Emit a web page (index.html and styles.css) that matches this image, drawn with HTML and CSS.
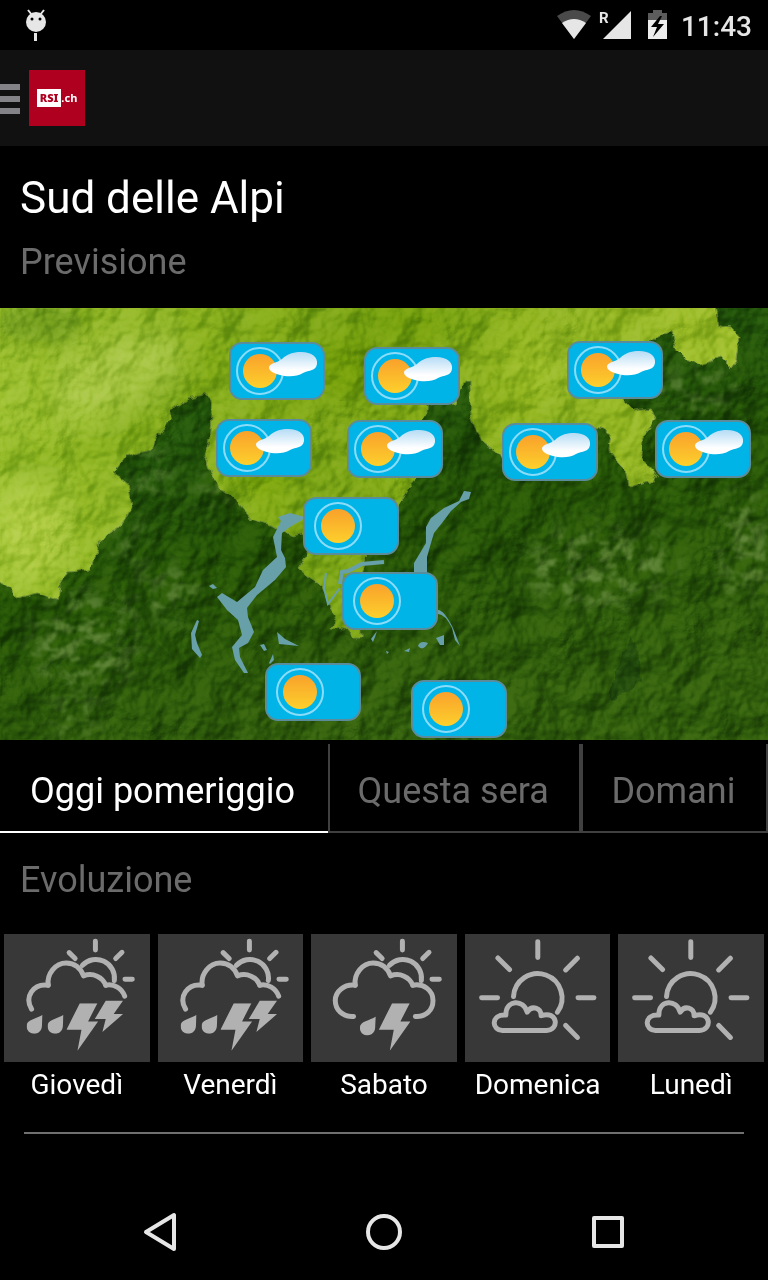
FILE: index.html
```html
<!DOCTYPE html>
<html lang="it">
<head>
    <meta charset="UTF-8">
    <meta name="viewport" content="width=device-width, initial-scale=1.0">
    <title>Meteo - Sud delle Alpi</title>
    <link rel="stylesheet" href="styles.css">
</head>
<body>

    <!-- status bar -->
    <div class="status-bar">
        <svg class="debug-icon" width="24" height="34" viewBox="0 0 24 34">
            <path d="M4 2l4 5M20 2l-4 5" stroke="#e6e6e6" stroke-width="2"/>
            <circle cx="12" cy="14" r="10" fill="#e6e6e6"/>
            <circle cx="8" cy="11" r="1.5"/>
            <circle cx="16" cy="11" r="1.5"/>
            <rect x="10" y="25" width="3" height="8" fill="#e6e6e6"/>
        </svg>
        <div class="status-right">
            <svg width="112" height="32" viewBox="0 0 112 32">
                <path d="M0 7Q17 -5 34 7L17 30Z" fill="#4a4a4a"/>
                <path d="M5 14Q17 6 29 14L17 30Z" fill="#e6e6e6"/>
                <text class="roaming" x="42" y="14">R</text>
                <path d="M46 30H74V2Z" fill="#e6e6e6"/>
                <path d="M91 4h5V1h9v3h5v8H91Z" fill="#5c5c5c"/>
                <path d="M91 11h19v19H91Z" fill="#ededed"/>
                <path d="M103 7l-9 11h6l-4 10 11-13h-6l4-8Z"/>
            </svg>
            <span class="clock">11:43</span>
        </div>
    </div>

    <!-- action bar -->
    <header class="action-bar">
        <button class="menu-button" type="button" aria-label="Menu">
            <span></span><span></span><span></span>
        </button>
        <a class="logo" href="#" aria-label="RSI.ch"><b>RSI</b><i>.ch</i></a>
    </header>

    <main>
        <div class="heading">
            <h1>Sud delle Alpi</h1>
            <h2>Previsione</h2>
        </div>

        <svg class="map" viewBox="0 0 768 432" role="img" aria-label="Mappa">
            <defs>
                <linearGradient id="sun" x2="0" y2="1">
                    <stop offset="0" stop-color="#f9a12b"/>
                    <stop offset="1" stop-color="#fdd02c"/>
                </linearGradient>
                <linearGradient id="cloud" x2="0" y2="1">
                    <stop offset="0" stop-color="#b5dcf5"/>
                    <stop offset=".75" stop-color="#fff"/>
                </linearGradient>
                <linearGradient id="low" x2=".4" y2="1">
                    <stop offset="0" stop-color="#1e5210"/>
                    <stop offset=".6" stop-color="#245306"/>
                    <stop offset="1" stop-color="#315e0c"/>
                </linearGradient>
                <linearGradient id="high" x2="1" y2="0">
                    <stop offset="0" stop-color="#9dc030"/>
                    <stop offset=".45" stop-color="#7ca513"/>
                    <stop offset="1" stop-color="#9fbe2b"/>
                </linearGradient>
                <!-- shaded terrain -->
                <filter id="relief" x="0" y="0" width="100%" height="100%" color-interpolation-filters="sRGB">
                    <feTurbulence type="fractalNoise" baseFrequency=".022 .02" numOctaves="4" seed="21"/>
                    <feColorMatrix values="0 0 0 0 0  0 0 0 0 0  0 0 0 0 0  1 0 0 0 0"/>
                    <feDiffuseLighting surfaceScale="16" diffuseConstant="0.7" lighting-color="#fff">
                        <feDistantLight azimuth="225" elevation="45"/>
                    </feDiffuseLighting>
                    <feGaussianBlur stdDeviation=".6"/>
                </filter>
                <!-- bare ridges -->
                <filter id="ridges" x="-20%" y="-20%" width="140%" height="140%" color-interpolation-filters="sRGB">
                    <feGaussianBlur in="SourceGraphic" stdDeviation="12" result="area"/>
                    <feTurbulence type="fractalNoise" baseFrequency=".06 .08" numOctaves="4" seed="5"/>
                    <feColorMatrix values="0 0 0 0 .5  0 0 0 0 .62  0 0 0 0 .32  6 0 0 0 -2.8"/>
                    <feComposite in2="area" operator="in"/>
                    <feGaussianBlur stdDeviation=".8"/>
                </filter>
                <filter id="ragged" x="-5%" y="-5%" width="110%" height="110%">
                    <feTurbulence type="fractalNoise" baseFrequency=".09" numOctaves="2" seed="3"/>
                    <feDisplacementMap in="SourceGraphic" scale="8" xChannelSelector="R" yChannelSelector="G"/>
                </filter>
                <filter id="haze" x="-50%" y="-50%" width="200%" height="200%">
                    <feGaussianBlur stdDeviation="12"/>
                </filter>
                <symbol id="sunny" viewBox="0 0 98 60">
                    <rect x="2" y="2" width="94" height="56" rx="12" fill="#00b4e8" stroke="#5a8c9c" stroke-width="2"/>
                    <circle cx="36" cy="30" r="23" fill="none" stroke="#8bdcf8" stroke-width="2"/>
                    <circle cx="36" cy="30" r="17" fill="url(#sun)"/>
                </symbol>
                <symbol id="partly" viewBox="0 0 98 60">
                    <rect x="2" y="2" width="94" height="56" rx="12" fill="#00b4e8" stroke="#5a8c9c" stroke-width="2"/>
                    <circle cx="32" cy="30" r="23" fill="none" stroke="#8bdcf8" stroke-width="2"/>
                    <circle cx="32" cy="30" r="17" fill="url(#sun)"/>
                    <path d="M41 26C42 22 49 22 54 18C60 12 67 11 73 11C84 11 90 16 89 23C88 30 81 29 75 32C69 36 59 36 52 34C45 32 41 30 41 26Z" fill="url(#cloud)"/>
                </symbol>
            </defs>

            <rect width="768" height="432" fill="url(#low)"/>
            <g opacity=".5" filter="url(#ridges)">
                <ellipse cx="85" cy="335" rx="55" ry="50"/>
                <ellipse cx="165" cy="285" rx="35" ry="25"/>
                <ellipse cx="75" cy="410" rx="25" ry="15"/>
                <ellipse cx="600" cy="260" rx="75" ry="40"/>
                <ellipse cx="745" cy="240" rx="25" ry="55"/>
                <ellipse cx="150" cy="165" rx="20" ry="20"/>
                <ellipse cx="215" cy="185" rx="20" ry="15"/>
                <ellipse cx="700" cy="85" rx="40" ry="20"/>
                <ellipse cx="125" cy="235" rx="20" ry="20"/>
            </g>
            <path d="M609 392L615 365L630 328L638 345L641 374L628 385Z" fill="#1b430b" opacity=".7" filter="url(#ragged)"/>

            <path filter="url(#ragged)" fill="url(#high)" stroke="#6b8a35" d="M-10 -10H714L719 19L732 20L740 29L737 52L731 60L721 50L701 57L687 52L677 42L672 24L662 26L640 40L624 92L634 102L649 100L656 112L642 129L641 149L656 165L651 174L629 179L627 165L617 155L609 142L611 125L597 119L560 150L510 160L499 147L484 135L477 125L471 109L470 72L464 72L455 96L426 97L426 107L418 120L425 160L416 172L407 182L399 195L385 230L366 250L360 265L362 330L353 330L345 321L330 320L337 309L328 295L323 279L312 272L298 260L307 247L312 230L302 225L293 227L272 219L250 212L247 205L233 189L220 179L211 165L205 149L211 125L212 105L211 92L205 87L187 90L170 104L172 112L160 125L150 142L125 149L113 164L128 175L132 199L120 219L100 232L98 245L90 262L68 264L60 275L58 292L37 285L17 290L10 280L-10 268Z"/>
            <g filter="url(#haze)" opacity=".55">
                <path d="M0 148Q80 165 130 120T245 40" fill="none" stroke="#6a9a08" stroke-width="12"/>
                <ellipse cx="115" cy="65" rx="70" ry="32" fill="#b9d15a" transform="rotate(-25 115 65)"/>
                <ellipse cx="32" cy="225" rx="35" ry="45" fill="#c4d957"/>
                <ellipse cx="255" cy="160" rx="30" ry="28" fill="#75a000"/>
                <ellipse cx="40" cy="15" rx="45" ry="18" fill="#4f800a"/>
                <ellipse cx="340" cy="60" rx="40" ry="30" fill="#6b9605"/>
                <ellipse cx="420" cy="15" rx="70" ry="15" fill="#5f9005"/>
                <ellipse cx="535" cy="60" rx="25" ry="30" fill="#abc832"/>
            </g>
            <rect class="relief" width="768" height="432" filter="url(#relief)"/>

            <g fill="#68a0aa">
                <path d="M305 209L290 205L278 209L281 213L273 229L277 249L263 262L255 279L237 294L222 285L217 289L227 302L238 312L242 327L232 339L235 352L244 365L248 365L240 349L239 340L248 335L254 324L248 309L247 300L257 287L275 272L286 259L285 250L281 242L282 225L290 219L302 212Z"/>
                <path d="M471 184L464 183L459 193L444 200L431 210L426 219L426 235L414 255L414 268L427 268L427 249L431 235L434 225L442 215L451 203L461 194L469 191Z"/>
                <path d="M197 312L191 325L192 341L200 350L202 347L197 335L195 327L199 313Z"/>
                <path d="M277 324L279 336L289 337L299 338L285 331Z"/>
                <path d="M209 278l4-2 4 4-4 1ZM260 337l4-1 3 6-3 1ZM269 355l4-9 1 6-4 4Z"/>
                <path d="M438 302Q444 302 453 320L460 338L455 332L452 320Q445 306 438 306Z"/>
                <path d="M418 338q2-6 10-3q-5 9-10 3ZM436 330l8-3v10h-4ZM404 343l6-3-1 4ZM386 343l3 1-2 2ZM371 331l6-8-2 6-2 5Z"/>
            </g>
            <g fill="none" stroke="#68a0aa" stroke-width="4">
                <path d="M340 276L342 264L348 263L362 256L384 254"/>
                <path d="M326 265L324 280L328 296L340 280" stroke-width="2"/>
            </g>

            <g>
                <use href="#partly" x="228" y="33" width="98" height="60"/>
                <use href="#partly" x="363" y="38" width="98" height="60"/>
                <use href="#partly" x="566" y="32" width="98" height="60"/>
                <use href="#partly" x="215" y="110" width="98" height="60"/>
                <use href="#partly" x="346" y="111" width="98" height="60"/>
                <use href="#partly" x="501" y="114" width="98" height="60"/>
                <use href="#partly" x="654" y="111" width="98" height="60"/>
                <use href="#sunny" x="302" y="188" width="98" height="60"/>
                <use href="#sunny" x="341" y="263" width="98" height="60"/>
                <use href="#sunny" x="264" y="354" width="98" height="60"/>
                <use href="#sunny" x="410" y="371" width="98" height="60"/>
            </g>
        </svg>

        <div class="tabs" role="tablist">
            <button class="tab active" type="button" role="tab" aria-selected="true">Oggi pomeriggio</button>
            <button class="tab" type="button" role="tab" aria-selected="false">Questa sera</button>
            <button class="tab" type="button" role="tab" aria-selected="false">Domani</button>
        </div>

        <h2 class="evolution-title">Evoluzione</h2>

        <!-- weather icons shared by the day tiles -->
        <svg class="sprite" width="0" height="0" aria-hidden="true">
            <symbol id="bolt" viewBox="0 0 95 143">
                <path d="M40 0H93L65 55H95L33 143L45 80H0Z"/>
            </symbol>
            <symbol id="drop" viewBox="0 0 48 57">
                <path d="M48 0L46 35C45 48 35 57 22 57C9 57 0 47 0 34C0 13 30 13 48 0Z"/>
            </symbol>
            <symbol id="cloud-sun" viewBox="0 0 438 384">
                <g class="line">
                    <path d="M275 22V48M196 56L214 74M355 55L336 74M364 136H386"/>
                    <path d="M236 94A56 56 0 0 1 332 140"/>
                    <path d="M133 154C128 120 155 87 187 87C212 87 232 103 239 126C268 115 297 130 306 154"/>
                </g>
            </symbol>
            <symbol id="storm" viewBox="0 0 438 384">
                <use href="#cloud-sun" width="438" height="384"/>
                <path class="line" d="M83 226C61 190 87 148 133 154M306 154C331 149 355 163 363 187"/>
                <use href="#drop" x="68" y="243" width="48" height="57"/>
                <use href="#drop" x="131" y="243" width="48" height="57"/>
                <use href="#bolt" x="188" y="208" width="95" height="143"/>
                <path d="M306 201H358L330 241H358L296 295L306 256H273Z"/>
            </symbol>
            <symbol id="thunder" viewBox="0 0 438 384">
                <use href="#cloud-sun" width="438" height="384"/>
                <path class="line" d="M128 248C95 250 73 228 73 200C73 173 100 150 133 154M306 154C340 148 367 170 367 200C367 230 345 250 314 248"/>
                <use href="#drop" x="147" y="248" width="48" height="57"/>
                <use href="#bolt" x="204" y="208" width="95" height="143"/>
            </symbol>
            <symbol id="fair" viewBox="0 0 438 384">
                <g class="line">
                    <path d="M219 23V71M99 72L134 107M338 73L303 108M50 192H98M340 192H388M303 275L338 311"/>
                    <path d="M146 188A73 73 0 1 1 278 235"/>
                    <path d="M113 290C79 290 77 241 123 244C122 197 177 195 187 235C201 213 229 222 229 246C280 228 285 290 245 290Z"/>
                </g>
            </symbol>
        </svg>

        <div class="days">
            <div class="day">
                <svg viewBox="0 0 438 384"><use href="#storm"/></svg>
                <span>Giovedì</span>
            </div>
            <div class="day">
                <svg viewBox="0 0 438 384"><use href="#storm"/></svg>
                <span>Venerdì</span>
            </div>
            <div class="day">
                <svg viewBox="0 0 438 384"><use href="#thunder"/></svg>
                <span>Sabato</span>
            </div>
            <div class="day">
                <svg viewBox="0 0 438 384"><use href="#fair"/></svg>
                <span>Domenica</span>
            </div>
            <div class="day">
                <svg viewBox="0 0 438 384"><use href="#fair"/></svg>
                <span>Lunedì</span>
            </div>
        </div>

        <hr class="divider">
    </main>

    <!-- system navigation -->
    <nav class="nav-bar">
        <button type="button" aria-label="Indietro">
            <svg width="40" height="40" viewBox="0 0 40 40"><path d="M34 3V37L6 20Z"/></svg>
        </button>
        <button type="button" aria-label="Home">
            <svg width="40" height="40" viewBox="0 0 40 40"><circle cx="20" cy="20" r="16"/></svg>
        </button>
        <button type="button" aria-label="Recenti">
            <svg width="40" height="40" viewBox="0 0 40 40"><rect x="6" y="6" width="28" height="28"/></svg>
        </button>
    </nav>

</body>
</html>
```
FILE: styles.css
```css
* {
    box-sizing: border-box;
}

body {
    font-family: Roboto, "Liberation Sans", sans-serif;
    margin: 0;
    background-color: #000;
    color: #fff;
    display: flex;
    flex-direction: column;
    min-height: 100vh;
}

button {
    font-family: inherit;
    background: none;
    border: 0;
    padding: 0;
    margin: 0;
}

/* status bar */
.status-bar {
    display: flex;
    justify-content: space-between;
    align-items: center;
    height: 50px;
    padding: 0 16px 0 24px;
}

.status-right {
    display: flex;
    align-items: center;
    gap: 12px;
}

.clock {
    font-size: 28px;
    font-weight: 500;
    line-height: 32px;
    color: #e6e6e6;
    padding-top: 4px;
}

.roaming {
    font-size: 15px;
    font-weight: 700;
    fill: #e6e6e6;
}

/* action bar */
.action-bar {
    display: flex;
    align-items: center;
    gap: 9px;
    height: 96px;
    background-color: #111;
}

.menu-button {
    display: flex;
    flex-direction: column;
    gap: 6px;
    width: 20px;
    padding-top: 2px;
}

.menu-button span {
    height: 6px;
    background-color: #838388;
}

.logo {
    display: flex;
    align-items: center;
    justify-content: center;
    width: 56px;
    height: 56px;
    background-color: #b00020;
    color: #fff;
    font-family: "Noto Sans", sans-serif;
    font-size: 11px;
    font-weight: 700;
    line-height: 18px;
    text-decoration: none;
}

.logo b {
    background-color: #fff;
    color: #b00020;
    padding: 0 3px;
}

.logo i {
    font-style: normal;
}

/* headings */
.heading {
    padding: 24px 20px 20px;
}

h1, h2 {
    margin: 0;
    font-weight: 400;
}

h1 {
    font-size: 44px;
    line-height: 56px;
}

h2 {
    font-size: 36px;
    line-height: 44px;
    color: #6b6b6b;
}

.heading h2 {
    margin-top: 14px;
    padding-bottom: 4px;
}

/* map */
.map {
    display: block;
    width: 100%;
}

.relief {
    mix-blend-mode: soft-light;
    opacity: 0.6;
}

/* tabs */
.tabs {
    display: flex;
    margin-top: 4px;
}

.tab {
    flex: 1 1 auto;
    height: 89px;
    padding: 6px 28px 0;
    border: 2px solid #404040;
    border-top: 0;
    color: #6b6b6b;
    font-size: 36px;
    text-align: left;
    white-space: nowrap;
}

.tab.active {
    color: #fff;
    border-color: #fff;
    border-width: 0 0 2px;
    padding: 6px 30px 0;
}

.evolution-title {
    padding: 25px 20px 0;
}

/* day tiles */
.sprite {
    position: absolute;
}

.days {
    display: grid;
    grid-template-columns: repeat(5, 1fr);
    gap: 8px;
    padding: 32px 4px 0;
}

.day {
    display: flex;
    flex-direction: column;
    text-align: center;
    font-size: 28px;
    line-height: 32px;
}

.day svg {
    display: block;
    width: 100%;
    background-color: #383838;
    fill: #b1b1b1;
}

.day span {
    padding-top: 7px;
}

.line {
    fill: none;
    stroke: #b1b1b1;
    stroke-width: 15px;
    stroke-linecap: round;
    stroke-linejoin: round;
}

.divider {
    margin: 31px 24px 0;
    border: 0;
    height: 2px;
    background-color: #6f6f6f;
}

/* system navigation */
.nav-bar {
    display: flex;
    justify-content: center;
    gap: 184px;
    align-items: center;
    height: 96px;
    margin-top: auto;
}

.nav-bar svg {
    display: block;
    fill: none;
    stroke: #e6e6e6;
    stroke-width: 4px;
    stroke-linejoin: round;
}
```
